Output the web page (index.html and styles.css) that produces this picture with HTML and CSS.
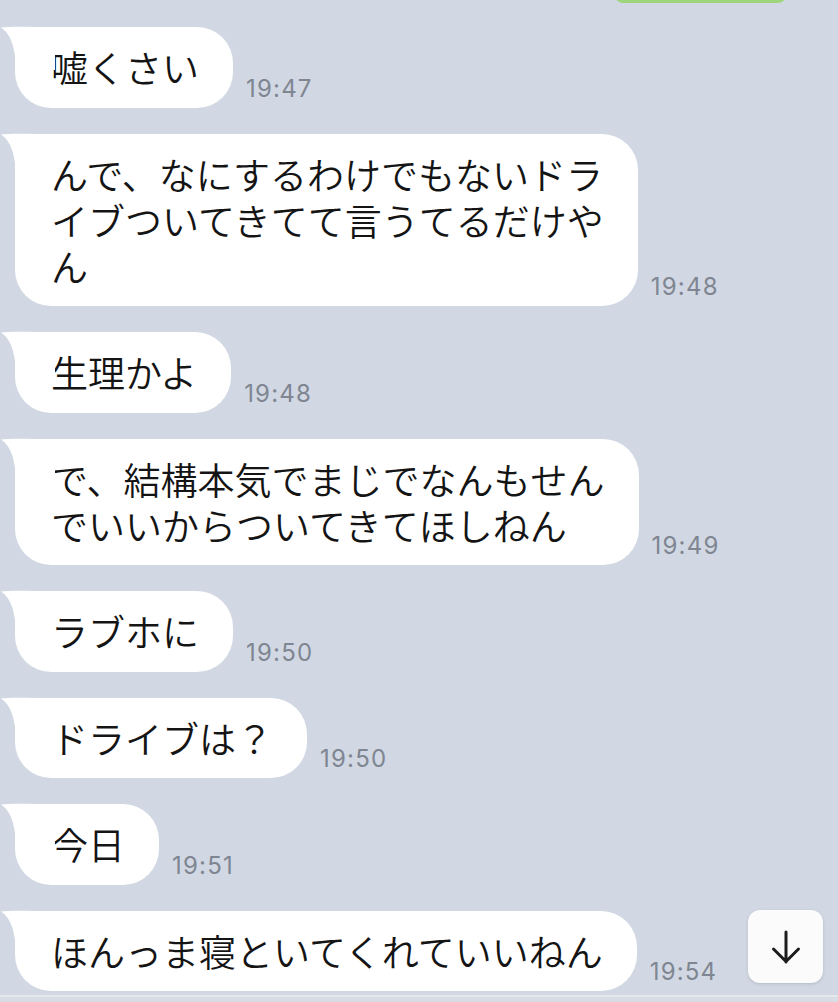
FILE: index.html
```html
<!DOCTYPE html>
<html lang="ja">
<head>
<meta charset="utf-8">
<title>Chat</title>
<link rel="stylesheet" href="styles.css">
</head>
<body>
<div class="screen">
  <div class="chat">
    <div class="prev-bubble"></div>
    <div class="messages">
      <div class="row">
        <div class="bubble"><svg class="tail" viewBox="0 0 54 44" width="54" height="44"><path d="M0 1.5 C10 0 30 1 54 1 L54 44 L14 44 L14 30 C12 15 7 6 0 1.5 Z"/></svg>嘘くさい</div>
        <span class="time">19:47</span>
      </div>
      <div class="row">
        <div class="bubble"><svg class="tail" viewBox="0 0 54 44" width="54" height="44"><path d="M0 1.5 C10 0 30 1 54 1 L54 44 L14 44 L14 30 C12 15 7 6 0 1.5 Z"/></svg>んで、なにするわけでもないドラ<br>イブついてきてて言うてるだけや<br>ん</div>
        <span class="time">19:48</span>
      </div>
      <div class="row">
        <div class="bubble"><svg class="tail" viewBox="0 0 54 44" width="54" height="44"><path d="M0 1.5 C10 0 30 1 54 1 L54 44 L14 44 L14 30 C12 15 7 6 0 1.5 Z"/></svg>生理かよ</div>
        <span class="time">19:48</span>
      </div>
      <div class="row">
        <div class="bubble"><svg class="tail" viewBox="0 0 54 44" width="54" height="44"><path d="M0 1.5 C10 0 30 1 54 1 L54 44 L14 44 L14 30 C12 15 7 6 0 1.5 Z"/></svg>で、結構本気でまじでなんもせん<br>でいいからついてきてほしねん</div>
        <span class="time">19:49</span>
      </div>
      <div class="row">
        <div class="bubble"><svg class="tail" viewBox="0 0 54 44" width="54" height="44"><path d="M0 1.5 C10 0 30 1 54 1 L54 44 L14 44 L14 30 C12 15 7 6 0 1.5 Z"/></svg>ラブホに</div>
        <span class="time">19:50</span>
      </div>
      <div class="row">
        <div class="bubble"><svg class="tail" viewBox="0 0 54 44" width="54" height="44"><path d="M0 1.5 C10 0 30 1 54 1 L54 44 L14 44 L14 30 C12 15 7 6 0 1.5 Z"/></svg>ドライブは？</div>
        <span class="time">19:50</span>
      </div>
      <div class="row">
        <div class="bubble"><svg class="tail" viewBox="0 0 54 44" width="54" height="44"><path d="M0 1.5 C10 0 30 1 54 1 L54 44 L14 44 L14 30 C12 15 7 6 0 1.5 Z"/></svg>今日</div>
        <span class="time">19:51</span>
      </div>
      <div class="row">
        <div class="bubble"><svg class="tail" viewBox="0 0 54 44" width="54" height="44"><path d="M0 1.5 C10 0 30 1 54 1 L54 44 L14 44 L14 30 C12 15 7 6 0 1.5 Z"/></svg>ほんっま寝といてくれていいねん</div>
        <span class="time">19:54</span>
      </div>
    </div>
    <button class="scroll-down" aria-label="下へ">
      <svg viewBox="0 0 40 40" width="40" height="40"><path d="M20 5 V35 M7.5 22 L20 34.5 L32.5 22" fill="none" stroke="#1c1c1c" stroke-width="3" stroke-linecap="round" stroke-linejoin="round"/></svg>
    </button>
  </div>
  <div class="footer"></div>
</div>
</body>
</html>
```

FILE: styles.css
```css
* {
  box-sizing: border-box;
}

html, body {
  margin: 0;
  padding: 0;
}

body {
  width: 838px;
  height: 1002px;
  overflow: hidden;
  background: #d1d8e3;
  font-family: "Noto Sans CJK JP", "Noto Sans", sans-serif;
}

.screen {
  display: flex;
  flex-direction: column;
  height: 1002px;
}

.chat {
  position: relative;
  height: 995px;
  overflow: hidden;
  background: #d1d8e3;
}

.prev-bubble {
  position: absolute;
  left: 615px;
  top: -20px;
  width: 171px;
  height: 23px;
  background: #9fd57c;
  border-radius: 0 0 8px 8px;
}

.messages {
  display: flex;
  flex-direction: column;
  gap: 26px;
  padding-top: 27px;
  padding-left: 15px;
}

.row {
  display: flex;
  align-items: flex-end;
}

.bubble {
  position: relative;
  background: #ffffff;
  color: #141414;
  font-size: 37px;
  font-weight: 350;
  line-height: 46px;
  padding: 17.25px 34px 17.25px 36px;
  border-radius: 36px;
  white-space: nowrap;
}

.tail {
  position: absolute;
  left: -14px;
  top: -1px;
  fill: #ffffff;
}

.time {
  margin-left: 13px;
  margin-bottom: 7px;
  font-family: "Inter", "Liberation Sans", sans-serif;
  font-size: 24px;
  letter-spacing: 1.2px;
  line-height: 1;
  color: #7f8692;
}

.scroll-down {
  position: absolute;
  left: 748px;
  top: 910px;
  width: 75px;
  height: 73px;
  padding: 0;
  border: none;
  border-radius: 12px;
  background: #fbfbfc;
  box-shadow: 0 1px 3px rgba(90, 100, 120, 0.25);
  display: flex;
  align-items: center;
  justify-content: center;
}

.footer {
  flex: 1;
  background: #d8dde5;
  border-top: 2px solid #e4e7eb;
}
```
